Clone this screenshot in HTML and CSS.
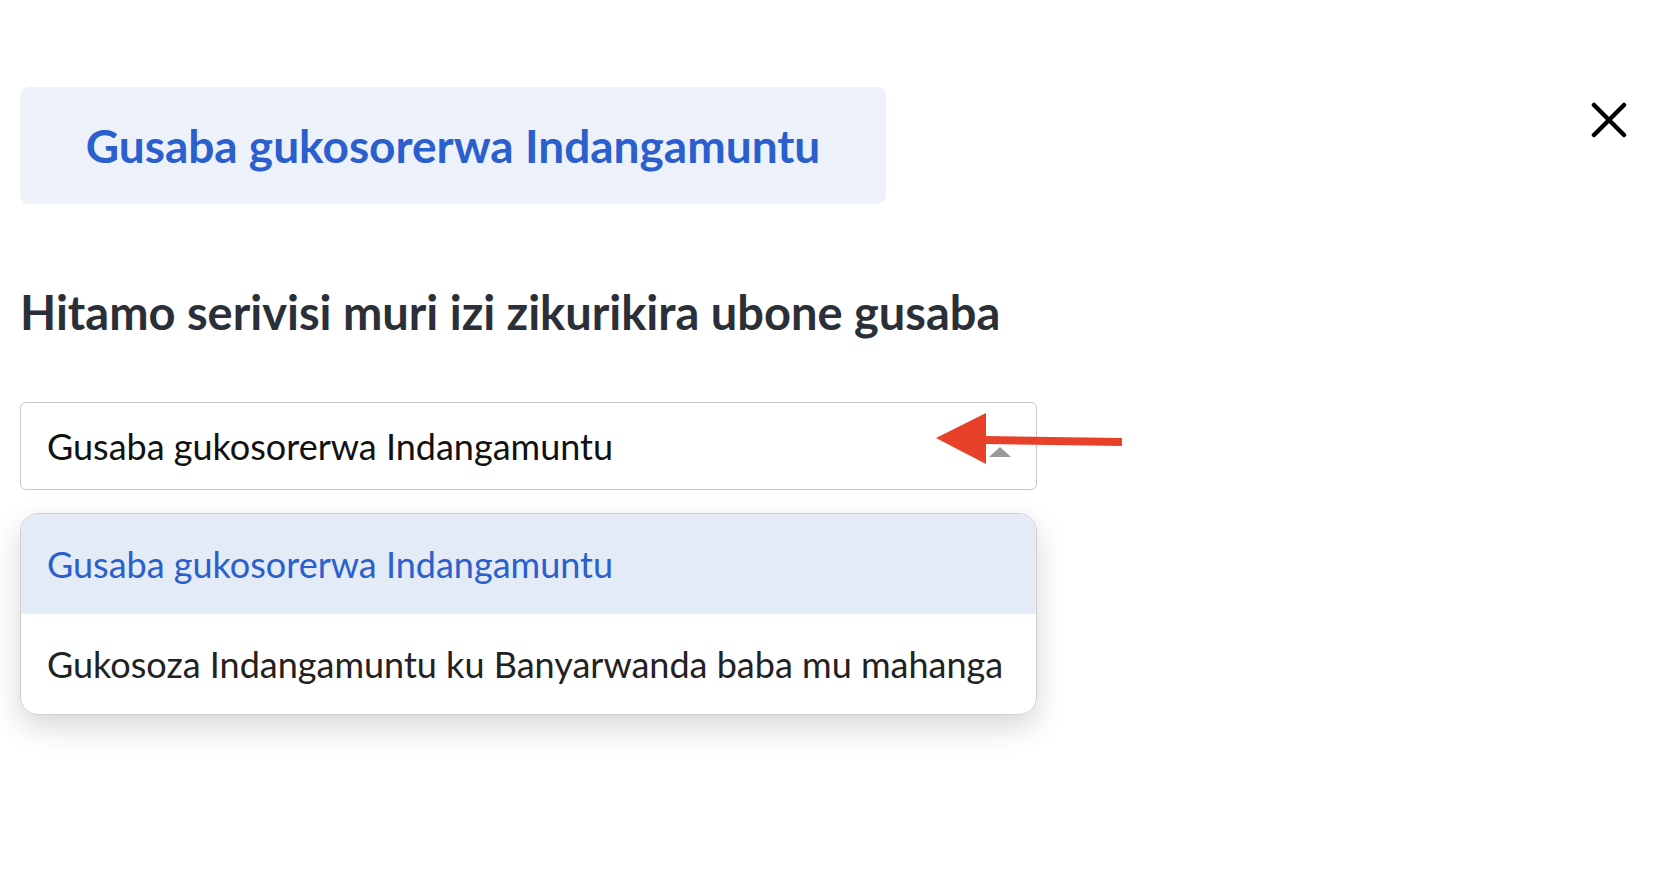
FILE: index.html
```html
<!DOCTYPE html>
<html>
<head>
<meta charset="utf-8">
<link rel="stylesheet" href="styles.css">
</head>
<body>
<div class="page">
  <div class="top">
    <div class="title-box"><h1 class="title">Gusaba gukosorerwa Indangamuntu</h1></div>
    <button class="close" aria-label="close">
      <svg width="36" height="36" viewBox="0 0 36 36"><path d="M3 3 L33 33 M33 3 L3 33" stroke="#000" stroke-width="4.5" stroke-linecap="round" fill="none"/></svg>
    </button>
  </div>
  <h2 class="subtitle">Hitamo serivisi muri izi zikurikira ubone gusaba</h2>
  <div class="select-wrap">
    <div class="select">
      <span class="select-value">Gusaba gukosorerwa Indangamuntu</span>
      <span class="caret"></span>
    </div>
    <svg class="arrow" width="200" height="56" viewBox="0 0 200 56"><path d="M50 24 L188 26 L188 34 L50 32 Z" fill="#e8412a"/><path d="M2 26 L52 1 L52 52 Z" fill="#e8412a"/></svg>
    <div class="menu">
      <div class="option active">Gusaba gukosorerwa Indangamuntu</div>
      <div class="option">Gukosoza Indangamuntu ku Banyarwanda baba mu mahanga</div>
    </div>
  </div>
</div>
</body>
</html>
```
FILE: styles.css
```css
* { box-sizing: border-box; }
html, body { margin: 0; padding: 0; background: #fff; }
body { font-family: Lato, "Noto Sans", sans-serif; min-height: 100vh; }
.page { padding: 87px 45px 0 20px; }
.top { display: flex; justify-content: space-between; align-items: flex-start; }
.title-box {
  width: 866px; height: 117px; background: #edf2fa; border-radius: 9px;
  display: flex; align-items: center; justify-content: center;
}
.title { margin: 0; font-size: 46px; font-weight: 700; color: #2a5fcd; }
.close { margin-top: 15px; padding: 0; border: 0; background: none; width: 36px; height: 36px; }
.close svg { display: block; }
.subtitle { margin: 78px 0 0 0; font-size: 47px; font-weight: 700; color: #2b2f38; line-height: 60px; }
.select-wrap { position: relative; width: 1017px; margin-top: 60px; }
.select {
  height: 88px; border: 1.5px solid #c9c9c9; border-radius: 6px;
  display: flex; align-items: center; justify-content: space-between;
  padding: 0 25px 0 26px;
}
.select-value { font-size: 36px; color: #111; }
.caret { width: 0; height: 0; border-left: 11px solid transparent; border-right: 11px solid transparent; border-bottom: 10px solid #999; margin-top: 12px; }
.arrow { position: absolute; left: 914px; top: 10px; }
.menu {
  margin-top: 23px; border: 1.5px solid #cfcfcf; border-radius: 18px; overflow: hidden;
  box-shadow: 0 12px 30px rgba(0,0,0,0.16);
}
.option { height: 100px; display: flex; align-items: center; padding-left: 26px; font-size: 36px; color: #222; }
.option.active { background: #e2ebf6; color: #2a5fcd; }
```
